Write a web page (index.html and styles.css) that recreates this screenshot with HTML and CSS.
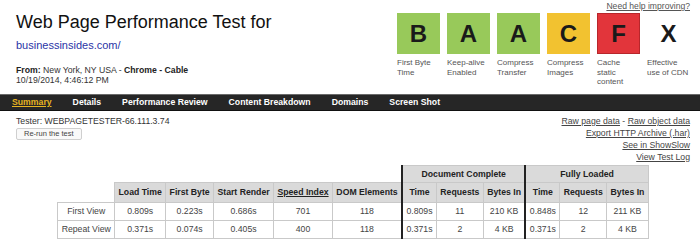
FILE: index.html
```html
<!DOCTYPE html>
<html>
<head>
<meta charset="utf-8">
<link rel="stylesheet" href="styles.css">
</head>
<body>
<header class="top">
  <div class="info">
    <h1 class="title">Web Page Performance Test for</h1>
    <a class="url" href="#">businessinsides.com/</a>
    <p class="from"><b>From:</b> New York, NY USA - <b>Chrome - Cable</b><br>10/19/2014, 4:46:12 PM</p>
  </div>
  <div class="grades">
    <a class="help" href="#">Need help improving?</a>
    <ul class="grade-list">
      <li class="grade"><div class="box green">B</div><span class="label">First Byte<br>Time</span></li>
      <li class="grade"><div class="box green">A</div><span class="label">Keep-alive<br>Enabled</span></li>
      <li class="grade"><div class="box green">A</div><span class="label">Compress<br>Transfer</span></li>
      <li class="grade"><div class="box yellow">C</div><span class="label">Compress<br>Images</span></li>
      <li class="grade"><div class="box red">F</div><span class="label">Cache<br>static<br>content</span></li>
      <li class="grade"><div class="box plain">X</div><span class="label">Effective<br>use of CDN</span></li>
    </ul>
  </div>
</header>
<nav class="nav">
  <a class="nav-item active" href="#">Summary</a>
  <a class="nav-item" href="#">Details</a>
  <a class="nav-item" href="#">Performance Review</a>
  <a class="nav-item" href="#">Content Breakdown</a>
  <a class="nav-item" href="#">Domains</a>
  <a class="nav-item" href="#">Screen Shot</a>
</nav>
<main class="content">
  <div class="sub">
    <div class="tester">
      <div class="tester-name">Tester: WEBPAGETESTER-66.111.3.74</div>
      <button class="rerun">Re-run the test</button>
    </div>
    <div class="links">
      <div><a href="#">Raw page data</a> - <a href="#">Raw object data</a></div>
      <div><a href="#">Export HTTP Archive (.har)</a></div>
      <div><a href="#">See in ShowSlow</a></div>
      <div><a href="#">View Test Log</a></div>
    </div>
  </div>
  <table class="results">
    <thead>
      <tr class="group-row">
        <th class="blank" colspan="6"></th>
        <th class="group sep" colspan="3">Document Complete</th>
        <th class="group sep" colspan="3">Fully Loaded</th>
      </tr>
      <tr class="head-row">
        <th class="blank"></th>
        <th>Load Time</th>
        <th>First Byte</th>
        <th>Start Render</th>
        <th><a href="#">Speed Index</a></th>
        <th>DOM Elements</th>
        <th class="sep">Time</th>
        <th>Requests</th>
        <th>Bytes In</th>
        <th class="sep">Time</th>
        <th>Requests</th>
        <th>Bytes In</th>
      </tr>
    </thead>
    <tbody>
      <tr>
        <td class="rowhead">First View</td>
        <td>0.809s</td><td>0.223s</td><td>0.686s</td><td>701</td><td>118</td>
        <td class="sep">0.809s</td><td>11</td><td>210 KB</td>
        <td class="sep">0.848s</td><td>12</td><td>211 KB</td>
      </tr>
      <tr>
        <td class="rowhead">Repeat View</td>
        <td>0.371s</td><td>0.074s</td><td>0.405s</td><td>400</td><td>118</td>
        <td class="sep">0.371s</td><td>2</td><td>4 KB</td>
        <td class="sep">0.371s</td><td>2</td><td>4 KB</td>
      </tr>
    </tbody>
  </table>
</main>
</body>
</html>
```

FILE: styles.css
```css
* { box-sizing: border-box; }
html, body { margin: 0; padding: 0; background: #fff; }
body {
  font-family: "Liberation Sans", Arial, Helvetica, sans-serif;
  color: #333;
  width: 700px;
  height: 246px;
  overflow: hidden;
}
a { color: inherit; }

.top {
  display: flex;
  justify-content: space-between;
  align-items: flex-start;
  padding: 0 10px 7.5px 16px;
}
.info { padding-top: 11.5px; }
.title {
  margin: 0;
  font-size: 18px;
  line-height: 21px;
  font-weight: normal;
  color: #111;
}
.url {
  display: block;
  margin-top: 6.5px;
  font-size: 11px;
  line-height: 13px;
  color: #2a34a6;
  text-decoration: none;
}
.from {
  margin: 13.4px 0 0;
  font-size: 8.7px;
  line-height: 10px;
  color: #333;
}
.from b { color: #222; }

.grades {
  display: flex;
  flex-direction: column;
  align-items: flex-end;
  padding-top: 1px;
}
.help {
  font-size: 8.6px;
  line-height: 11px;
  color: #555;
}
.grade-list {
  list-style: none;
  margin: 1px 0 0;
  padding: 0;
  display: flex;
  gap: 7px;
}
.grade { width: 43px; }
.box {
  width: 43px;
  height: 41px;
  display: flex;
  align-items: center;
  justify-content: center;
  font-size: 24px;
  font-weight: bold;
  color: #1a1a1a;
}
.green { background: #98c95a; }
.yellow { background: #f2c230; }
.red { background: #e2353b; border: 1px solid #b8262b; }
.plain { background: #fff; }
.label {
  display: block;
  margin-top: 4px;
  font-size: 8px;
  line-height: 9.5px;
  color: #555;
  white-space: nowrap;
}

.nav {
  display: flex;
  gap: 21px;
  height: 17px;
  padding-left: 12px;
  align-items: center;
  background: #262626;
  border-top: 1px solid #6a6a6a;
  border-bottom: 1px solid #111;
}
.nav-item {
  font-size: 8.7px;
  font-weight: bold;
  color: #fff;
  text-decoration: none;
  line-height: 11px;
}
.nav-item.active {
  color: #e6b422;
  text-decoration: underline;
}

.content { padding: 0 10px 0 16px; }
.sub {
  display: flex;
  justify-content: space-between;
  padding-top: 4px;
}
.tester-name {
  font-size: 8.7px;
  line-height: 12px;
  color: #333;
}
.rerun {
  display: block;
  margin-top: 1px;
  height: 12px;
  padding: 0 7px;
  font-family: inherit;
  font-size: 7.5px;
  line-height: 10px;
  color: #444;
  background: #f9f9f9;
  border: 1px solid #cfcfcf;
  border-radius: 2px;
}
.links {
  text-align: right;
  font-size: 8.7px;
  line-height: 12px;
  color: #444;
}
.links a { color: #444; }

.results {
  margin: 2px auto 0;
  border-collapse: collapse;
  font-size: 8.7px;
  color: #444;
}
.results th, .results td {
  border: 1px solid #c9c9c9;
  padding: 3px 3.4px;
  line-height: 11px;
  text-align: center;
  white-space: nowrap;
}
.results th {
  background: #dadada;
  color: #222;
  font-weight: bold;
}
.results .head-row th { padding: 4px 3.4px; }
.results .group-row th { padding: 3px 3.4px; line-height: 10px; }
.results th.blank {
  background: #fff;
  border: none;
}
.results .head-row th.blank { border-bottom: 1px solid #c9c9c9; border-left: none; border-top: none; }
.results th a { color: #222; }
.results td { background: #fff; }
.results .sep { border-left: 2px solid #222; }
```
